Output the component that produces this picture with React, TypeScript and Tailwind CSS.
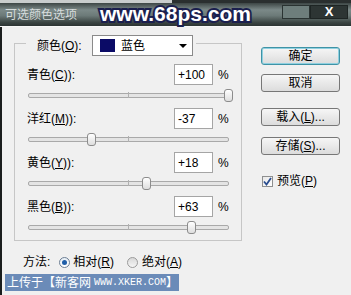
import React from "react";

const FONT = "font-['Liberation_Sans','Noto_Sans_CJK_SC',sans-serif]";

function U({ c }: { c: string }) {
  return <span className="underline underline-offset-[1px]">{c}</span>;
}

function Slider({ value }: { value: number }) {
  const left = 100 + value; // track width ~201
  return (
    <div className="relative ml-[1px] h-[13px] w-[201px]">
      <div className="absolute left-0 top-[4px] h-[5px] w-[201px] rounded-[2px] border border-[#a9a9a9] bg-[#e4e4e4]" />
      <div className="absolute left-[100px] top-[3px] h-[6px] w-[1px] bg-[#b0b0b0]" />
      <div
        className="absolute top-0 h-[13px] w-[9px] rounded-[3px] border border-[#8c8c8c] bg-gradient-to-b from-[#ffffff] to-[#dedede]"
        style={{ left: left - 4 }}
      />
    </div>
  );
}

function Row({ label, m, rest, value, text }: { label: string; m: string; rest: string; value: number; text: string }) {
  return (
    <div className="flex flex-col">
      <div className="flex h-[21px] items-center">
        <div className="w-[147px] text-[12px] text-black">
          {label}(<U c={m} />){rest}
        </div>
        <div className="flex h-[21px] w-[39px] items-center border border-[#a5a5a5] bg-white pl-[3px] text-[12px] text-black">
          {text}
        </div>
        <div className="ml-[5px] text-[12px] text-black">%</div>
      </div>
      <div className="mt-[4px] mb-[6px]">
        <Slider value={value} />
      </div>
    </div>
  );
}

function Btn({ children, def }: { children: React.ReactNode; def?: boolean }) {
  return (
    <div
      className={
        def
          ? "flex h-[18px] w-[79px] items-center justify-center rounded-[3px] border border-[#3f93a6] bg-gradient-to-b from-[#f6f6f6] to-[#dcdcdc] text-[12px] text-black shadow-[inset_0_0_0_1px_#8fd0e0]"
          : "flex h-[18px] w-[79px] items-center justify-center rounded-[3px] border border-[#777777] bg-gradient-to-b from-[#f6f6f6] to-[#dcdcdc] text-[12px] text-black"
      }
    >
      {children}
    </div>
  );
}

export default function App() {
  return (
    <div className={`relative h-[295px] w-[351px] overflow-hidden bg-[#f0f0f0] ${FONT}`}>
      {/* top strip from window behind */}
      <div className="flex h-[3px]">
        <div className="w-[172px] bg-[#c9cdcd]" />
        <div className="flex-1 bg-[#2a2f2f]" />
      </div>
      {/* title bar */}
      <div className="flex h-[23px] items-center bg-[linear-gradient(to_bottom,#3d4645_0%,#7b8988_30%,#6c7a78_55%,#3a4442_85%,#2c3433_100%)]">
        <div className="ml-[5px] text-[12px] text-[#d6dcdc]">可选颜色选项</div>
        <div className="flex-1" />
        <div className="mb-[6px] h-[14px] w-[28px] border border-[#2a3332] bg-[#6e7e7c]" />
        <div className="mb-[6px] mr-[3px] flex h-[14px] w-[38px] items-center justify-center border border-[#1e2524] bg-[#2d3534] text-[13px] font-bold leading-none text-white">
          X
        </div>
      </div>
      <div className="h-[1px] bg-[#f8f8f8]" />
      {/* body */}
      <div className="flex h-[268px]">
        <div className="w-[2px] bg-[#1a1d1d]" />
        <div className="flex flex-1 flex-col">
          <div className="flex">
            {/* group box */}
            <div className="relative ml-[12px] mt-[16px] w-[228px] border border-[#c6c6c6] px-[12px] pt-[20px]">
              <div className="absolute left-[11px] top-[-9px] flex items-center bg-[#f0f0f0] px-[3px]">
                <div className="ml-[8px] w-[55px] text-[12px] text-black">
                  颜色(<U c="O" />):
                </div>
                <div className="flex h-[21px] w-[101px] items-center border border-[#8a8a8a] bg-white">
                  <div className="ml-[7px] h-[13px] w-[15px] bg-[#0b0b66]" />
                  <div className="ml-[6px] text-[12px] text-black">蓝色</div>
                  <div className="flex-1" />
                  <div className="mr-[5px] h-0 w-0 border-x-[4px] border-t-[4px] border-x-transparent border-t-black" />
                </div>
              </div>
              <Row label="青色" m="C" rest="):" value={100} text="+100" />
              <Row label="洋红" m="M" rest="):" value={-37} text="-37" />
              <Row label="黄色" m="Y" rest="):" value={18} text="+18" />
              <Row label="黑色" m="B" rest="):" value={63} text="+63" />
            </div>
            {/* buttons */}
            <div className="ml-[19px] mt-[20px] flex flex-col">
              <Btn def>确定</Btn>
              <div className="mt-[9px]">
                <Btn>取消</Btn>
              </div>
              <div className="mt-[16px]">
                <Btn>
                  载入(<U c="L" />)...
                </Btn>
              </div>
              <div className="mt-[11px]">
                <Btn>
                  存储(<U c="S" />)...
                </Btn>
              </div>
              <div className="ml-[1px] mt-[17px] flex items-center">
                <div className="flex h-[11px] w-[11px] items-center justify-center border border-[#8e8f8f] bg-gradient-to-br from-[#e8e8e8] to-[#ffffff]">
                  <svg width="9" height="9" viewBox="0 0 9 9">
                    <path d="M1 4.5 L3.5 7.5 L8 1" fill="none" stroke="#2a4d8f" strokeWidth="1.8" />
                  </svg>
                </div>
                <div className="ml-[4px] text-[12px] text-black">
                  预览(<U c="P" />)
                </div>
              </div>
            </div>
          </div>
          {/* method row */}
          <div className="ml-[21px] mt-[12px] flex items-center text-[12px] text-black">
            <div>方法:</div>
            <div className="ml-[9px] flex h-[11px] w-[11px] items-center justify-center rounded-full border border-[#6d7f94] bg-gradient-to-b from-[#e6eef6] to-[#ffffff]">
              <div className="h-[5px] w-[5px] rounded-full bg-[#1f5ea8]" />
            </div>
            <div className="ml-[3px]">
              相对(<U c="R" />)
            </div>
            <div className="ml-[13px] h-[11px] w-[11px] rounded-full border border-[#9a9a9a] bg-gradient-to-b from-[#d8d8d8] to-[#f6f6f6]" />
            <div className="ml-[4px]">
              绝对(<U c="A" />)
            </div>
          </div>
        </div>
      </div>
      {/* watermarks */}
      <div className="absolute left-[100px] top-[1px] text-[21px] font-bold leading-[26px] text-white [paint-order:stroke_fill] [-webkit-text-stroke:4px_#1b1f4e] font-['Liberation_Sans',sans-serif]">
        www.68ps.com
      </div>
      <div className="absolute left-[5px] top-[274px] flex h-[17px] items-center whitespace-nowrap bg-[#6b8bb8] pl-[2px] pr-[1px] text-[12px] leading-none text-white">
        <span className="shrink-0">上传于【新客网</span>
        <span className="ml-[3px] shrink-0 font-['Liberation_Mono',monospace] text-[10px]">WWW.XKER.COM</span>
        <span className="shrink-0">】</span>
      </div>
    </div>
  );
}
